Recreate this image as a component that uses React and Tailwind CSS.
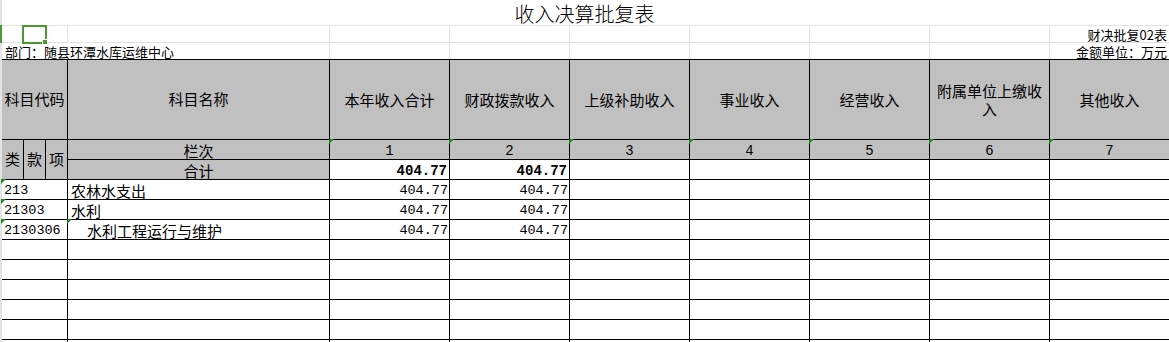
import React from "react";

const cjk = "font-['Noto_Sans_CJK_SC',sans-serif]";
const mono = "font-['Liberation_Mono','Noto_Sans_CJK_SC',monospace]";

const topGrid = "grid grid-cols-[22px_22px_22px_262px_repeat(7,120px)] pl-[2px]";
const tableGrid =
  "grid grid-cols-[22px_22px_22px_262px_repeat(7,120px)] auto-rows-[20px]";

const headers = [
  "本年收入合计",
  "财政拨款收入",
  "上级补助收入",
  "事业收入",
  "经营收入",
  "附属单位上缴收入",
  "其他收入",
];

const rows = [
  { code: "213", name: "农林水支出", total: "404.77", fiscal: "404.77" },
  { code: "21303", name: "水利", total: "404.77", fiscal: "404.77" },
  {
    code: "2130306",
    name: "水利工程运行与维护",
    total: "404.77",
    fiscal: "404.77",
    indent: true,
  },
];

const Mark = () => (
  <span className="absolute left-[-1px] top-[-1px] w-0 h-0 border-t-[5px] border-r-[5px] border-t-[#1e8a1e] border-r-transparent" />
);

const cell = "relative border-r border-b border-black";

export default function App() {
  return (
    <div
      className={`relative w-[1169px] h-[342px] overflow-hidden bg-white text-black ${cjk}`}
    >
      <div className="absolute left-0 top-0 w-[2px] h-full bg-[#e3e3e3]" />
      <div className="absolute left-0 top-[25px] w-[2px] h-[18px] bg-[#4b9a2f]" />

      {/* title row */}
      <div className="h-[26px] border-b border-[#e2e2e2] flex items-center justify-center pt-[3px] text-[20px] font-light leading-none">
        收入决算批复表
      </div>

      {/* form number row */}
      <div className={`${topGrid} h-[17px] border-b border-[#e2e2e2]`}>
        <div className="col-span-3 border-r border-[#e2e2e2]" />
        <div className="border-r border-[#e2e2e2]" />
        <div className="border-r border-[#e2e2e2]" />
        <div className="border-r border-[#e2e2e2]" />
        <div className="border-r border-[#e2e2e2]" />
        <div className="border-r border-[#e2e2e2]" />
        <div className="border-r border-[#e2e2e2]" />
        <div className="border-r border-[#e2e2e2]" />
        <div className="flex items-end justify-end pr-[3px] pb-px text-[13px] leading-none whitespace-nowrap">
          财决批复02表
        </div>
      </div>

      {/* department row */}
      <div className={`${topGrid} h-[16px]`}>
        <div className="col-span-4 border-r border-[#e2e2e2] flex items-end pl-[3px] pb-px text-[13px] leading-none whitespace-nowrap">
          部门：随县环潭水库运维中心
        </div>
        <div className="border-r border-[#e2e2e2]" />
        <div className="border-r border-[#e2e2e2]" />
        <div className="border-r border-[#e2e2e2]" />
        <div className="border-r border-[#e2e2e2]" />
        <div className="border-r border-[#e2e2e2]" />
        <div className="border-r border-[#e2e2e2]" />
        <div className="flex items-end justify-end pr-[3px] pb-px text-[13px] leading-none whitespace-nowrap">
          金额单位：万元
        </div>
      </div>

      {/* selected cell */}
      <div className="absolute left-[22px] top-[25px] w-[25px] h-[19px] border-2 border-[#4b9a2f]" />
      <div className="absolute left-[42px] top-[39px] w-[6px] h-[6px] bg-[#4b9a2f] border border-white" />

      <div className={`ml-[2px] border-t border-black ${tableGrid}`}>
        {/* header */}
        <div
          className={`${cell} col-span-3 row-span-4 bg-[#c0c0c0] flex items-center justify-center text-[15px] whitespace-nowrap`}
        >
          科目代码
        </div>
        <div
          className={`${cell} row-span-4 bg-[#c0c0c0] flex items-center justify-center text-[15px]`}
        >
          科目名称
        </div>
        {headers.map((h) => (
          <div
            key={h}
            className={`${cell} row-span-4 bg-[#c0c0c0] flex items-center justify-center text-center text-[15px] leading-[18px] px-px`}
          >
            {h}
          </div>
        ))}

        {/* column numbers */}
        {["类", "款", "项"].map((t) => (
          <div
            key={t}
            className={`${cell} row-span-2 bg-[#c0c0c0] flex items-center justify-center text-[15px]`}
          >
            {t}
          </div>
        ))}
        <div
          className={`${cell} bg-[#c0c0c0] flex items-center justify-center text-[15px] leading-none pt-[2px]`}
        >
          栏次
        </div>
        {[1, 2, 3, 4, 5, 6, 7].map((n) => (
          <div
            key={n}
            className={`${cell} bg-[#c0c0c0] flex items-center justify-center text-[14px] leading-none pt-[3px] ${mono}`}
          >
            <Mark />
            {n}
          </div>
        ))}

        {/* total */}
        <div
          className={`${cell} col-start-4 bg-[#c0c0c0] flex items-center justify-center text-[15px] leading-none pt-[1px]`}
        >
          合计
        </div>
        <div
          className={`${cell} flex items-center justify-end pr-[2px] pt-[3px] text-[14px] font-bold leading-none ${mono}`}
        >
          404.77
        </div>
        <div
          className={`${cell} flex items-center justify-end pr-[2px] pt-[3px] text-[14px] font-bold leading-none ${mono}`}
        >
          404.77
        </div>
        <div className={cell} />
        <div className={cell} />
        <div className={cell} />
        <div className={cell} />
        <div className={cell} />

        {/* data */}
        {rows.map((r) => (
          <React.Fragment key={r.code}>
            <div
              className={`${cell} col-span-3 flex items-center pl-[2px] pt-[3px] text-[13.5px] leading-none ${mono}`}
            >
              <Mark />
              {r.code}
            </div>
            <div
              className={`${cell} flex items-center pt-[2px] text-[15px] leading-none ${
                r.indent ? "pl-[19px]" : "pl-[3px]"
              }`}
            >
              {r.indent && <Mark />}
              {r.name}
            </div>
            <div
              className={`${cell} flex items-center justify-end pr-px pt-[3px] text-[13.5px] leading-none ${mono}`}
            >
              {r.total}
            </div>
            <div
              className={`${cell} flex items-center justify-end pr-px pt-[3px] text-[13.5px] leading-none ${mono}`}
            >
              {r.fiscal}
            </div>
            <div className={cell} />
            <div className={cell} />
            <div className={cell} />
            <div className={cell} />
            <div className={cell} />
          </React.Fragment>
        ))}

        {/* empty rows */}
        {[0, 1, 2, 3, 4, 5].map((i) => (
          <React.Fragment key={i}>
            <div className={`${cell} col-span-3`} />
            <div className={cell} />
            <div className={cell} />
            <div className={cell} />
            <div className={cell} />
            <div className={cell} />
            <div className={cell} />
            <div className={cell} />
            <div className={cell} />
          </React.Fragment>
        ))}
      </div>
    </div>
  );
}
